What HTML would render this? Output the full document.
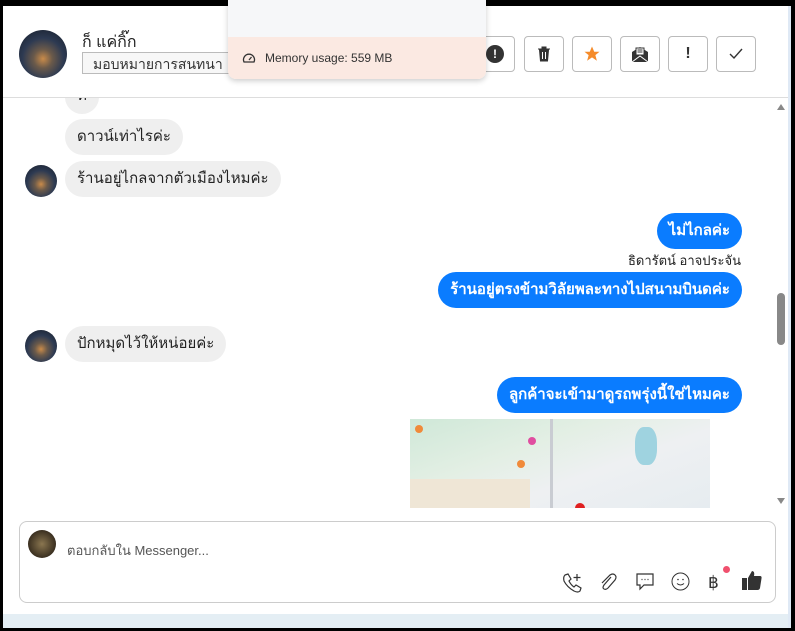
<!DOCTYPE html>
<html><head><meta charset="utf-8"><style>
*{box-sizing:border-box;margin:0;padding:0}
body{width:795px;height:631px;background:#000;position:relative;overflow:hidden;font-family:"Liberation Sans","Noto Sans CJK SC",sans-serif}
.win{position:absolute;left:3px;top:6px;width:785px;height:622px;background:#fff}
.rstrip{position:absolute;left:788px;top:6px;width:3px;height:622px;background:#dfe9f5}
.hdr{position:absolute;left:0;top:0;width:785px;height:92px;border-bottom:1px solid #ddd;background:#fff}
.av{position:absolute;border-radius:50%;background:radial-gradient(circle at 50% 60%,#c98b4a 0,#6b5a4a 25%,#2d3a52 55%,#141a24 100%)}
.name{position:absolute;left:79px;top:24px;font-size:16px;color:#222}
.sel{position:absolute;left:79px;top:46px;width:160px;height:22px;border:1px solid #bbb;background:#f7f7f7;font-size:14px;color:#333;padding:1px 10px;overflow:hidden;white-space:nowrap}
.btn{position:absolute;top:30px;width:40px;height:36px;border:1px solid #bbb;border-radius:4px;display:flex;align-items:center;justify-content:center;font-size:16px;color:#333;background:#fff}
.pop{position:absolute;width:258px;height:79px;border-radius:0 0 8px 8px;box-shadow:0 2px 6px rgba(0,0,0,.2);overflow:hidden}
.pop .t{height:37px;background:#f6f7f9}
.pop .b{height:42px;background:#fbe9e2;font-size:12px;color:#333;padding:14px 0 0 37px;position:relative}
.chat{position:absolute;left:0;top:92px;width:772px;height:410px;overflow:hidden}
.msg{position:absolute;border-radius:18px;font-size:15px;padding:0 12px;height:36px;line-height:36px;white-space:nowrap}
.in{background:#efefef;color:#222}
.out{background:#0a7cff;color:#fff;font-weight:bold}
.sb{position:absolute;left:772px;top:92px;width:13px;height:412px}
.comp{position:absolute;left:16px;top:515px;width:757px;height:82px;border:1px solid #ccc;border-radius:8px}
.bot{position:absolute;left:0;top:608px;width:785px;height:14px;background:#e4eef4}
.ic{position:absolute;top:566px}
</style></head><body>
<div class="win">
 <div class="chat">
  <div class="msg in" style="left:62px;top:-20px">ที่</div>
  <div class="msg in" style="left:62px;top:21px">ดาวน์เท่าไรค่ะ</div>
  <div class="av" style="left:22px;top:67px;width:32px;height:32px"></div>
  <div class="msg in" style="left:62px;top:63px">ร้านอยู่ไกลจากตัวเมืองไหมค่ะ</div>
  <div class="msg out" style="right:33px;top:115px">ไม่ไกลค่ะ</div>
  <div style="position:absolute;right:34px;top:152px;font-size:13px;color:#222">ธิดารัตน์ อาจประจัน</div>
  <div class="msg out" style="right:33px;top:174px">ร้านอยู่ตรงข้ามวิลัยพละทางไปสนามบินดค่ะ</div>
  <div class="av" style="left:22px;top:232px;width:32px;height:32px"></div>
  <div class="msg in" style="left:62px;top:228px">ปักหมุดไว้ให้หน่อยค่ะ</div>
  <div class="msg out" style="right:33px;top:279px">ลูกค้าจะเข้ามาดูรถพรุ่งนี้ใช่ไหมคะ</div>
  <div style="position:absolute;left:407px;top:321px;width:300px;height:91px;overflow:hidden;background:linear-gradient(160deg,#cfe8d8 0,#e3efe4 35%,#eef0f2 60%,#e6ecf0 100%)">
   <div style="position:absolute;left:0;top:60px;width:120px;height:40px;background:#efe6d6"></div>
   <div style="position:absolute;left:140px;top:0;width:3px;height:91px;background:#c9ccd2"></div>
   <div style="position:absolute;left:225px;top:8px;width:22px;height:38px;background:#9fd3e0;border-radius:40%"></div>
   <div style="position:absolute;left:5px;top:6px;width:8px;height:8px;border-radius:50%;background:#f08a3a"></div>
   <div style="position:absolute;left:107px;top:41px;width:8px;height:8px;border-radius:50%;background:#f08a3a"></div>
   <div style="position:absolute;left:118px;top:18px;width:8px;height:8px;border-radius:50%;background:#e04ea0"></div>
   <div style="position:absolute;left:165px;top:84px;width:10px;height:10px;border-radius:50%;background:#e02020"></div>
  </div>
 </div>
 <div class="hdr">
  <div class="av" style="left:16px;top:24px;width:48px;height:48px"></div>
  <div class="name">ก็ แค่กิ๊ก</div>
  <div class="sel">มอบหมายการสนทนา</div>
  <div class="btn" style="left:472px"><span style="width:18px;height:18px;border-radius:50%;background:#333;color:#fff;font-size:12px;font-weight:bold;display:flex;align-items:center;justify-content:center">!</span></div>
  <div class="btn" style="left:521px"><svg width="16" height="16" viewBox="0 0 16 16"><path d="M2 3h12M6 3V1h4v2M3.5 4l1 11h7l1-11z" fill="#333" stroke="#333"/><path d="M6.5 6v7M9.5 6v7" stroke="#fff"/></svg></div>
  <div class="btn" style="left:569px"><svg width="18" height="18" viewBox="0 0 24 24"><path d="M12 2l3 7h7l-5.5 4.5 2 7.5L12 16.5 5.5 21l2-7.5L2 9h7z" fill="#f58b2a"/></svg></div>
  <div class="btn" style="left:617px"><svg width="18" height="18" viewBox="0 0 18 18"><path d="M1 7l8-5 8 5v10H1z" fill="#333"/><rect x="5" y="3" width="8" height="7" fill="#fff" stroke="#333"/><path d="M6.5 5h5M6.5 7h5" stroke="#333"/><path d="M1 17l8-6 8 6" stroke="#fff" fill="none"/></svg></div>
  <div class="btn" style="left:665px;font-weight:bold">!</div>
  <div class="btn" style="left:713px"><svg width="14" height="12" viewBox="0 0 14 12"><path d="M1 6l4 4 8-9" stroke="#333" fill="none" stroke-width="1.4"/></svg></div>
 </div>
 <div class="pop" style="left:225px;top:-6px"><div class="t"></div><div class="b"><svg style="position:absolute;left:14px;top:15px" width="14" height="12" viewBox="0 0 14 12"><path d="M2 10a5.5 5.5 0 1 1 10 0z" fill="none" stroke="#333" stroke-width="1.3"/><path d="M7 8l2.5-3" stroke="#333" stroke-width="1.3"/></svg>Memory usage: 559 MB</div></div>
 <div class="sb">
  <div style="position:absolute;left:2px;top:6px;border:4px solid transparent;border-bottom:6px solid #888;border-top:0"></div>
  <div style="position:absolute;left:2px;top:195px;width:8px;height:52px;border-radius:4px;background:#888"></div>
  <div style="position:absolute;left:2px;top:400px;border:4px solid transparent;border-top:6px solid #888;border-bottom:0"></div>
 </div>
 <div class="comp"></div>
 <div class="av" style="left:25px;top:524px;width:28px;height:28px;background:radial-gradient(circle,#8a7650 0,#3a2f20 70%)"></div>
 <div style="position:absolute;left:64px;top:534px;font-size:13px;color:#555">ตอบกลับใน Messenger...</div>
 <svg class="ic" style="left:558px" width="22" height="22" viewBox="0 0 22 22"><path d="M4 3l3-1 3 5-2 2q2 4 5 6l2-2 5 3-1 3q-2 2-6 0Q6 15 3 9 2 5 4 3z" fill="none" stroke="#333" stroke-width="1.2"/><path d="M16 2v7M12.5 5.5h7" stroke="#333" stroke-width="1.2"/></svg>
 <svg class="ic" style="left:595px" width="20" height="20" viewBox="0 0 20 20"><path d="M13 5L6 13q-2 3 0 4t4-1l7-8q2-3 0-5t-5 0L4 11" fill="none" stroke="#333" stroke-width="1.2"/></svg>
 <svg class="ic" style="left:632px" width="20" height="20" viewBox="0 0 20 20"><path d="M2 2h16v11H9l-4 4v-4H2z" fill="none" stroke="#333" stroke-width="1.2"/><path d="M6.5 7.5h1M9.5 7.5h1M12.5 7.5h1" stroke="#333" stroke-width="1.3"/></svg>
 <svg class="ic" style="left:668px" width="19" height="19" viewBox="0 0 19 19"><circle cx="9.5" cy="9.5" r="8.5" fill="none" stroke="#333"/><path d="M6 11.5q3.5 3 7 0" fill="none" stroke="#333"/><circle cx="7" cy="7.5" r=".8" fill="#333"/><circle cx="12" cy="7.5" r=".8" fill="#333"/></svg>
 <div style="position:absolute;left:705px;top:567px;font-size:17px;color:#333">฿</div>
 <div style="position:absolute;left:720px;top:560px;width:7px;height:7px;border-radius:50%;background:#f0506e"></div>
 <svg class="ic" style="left:738px;top:563px" width="22" height="22" viewBox="0 0 22 22"><rect x="1" y="9" width="5" height="12" fill="#333"/><path d="M7 9l4-7q3 0 2 5h6q2 0 1.5 2.5L19 19q-.5 2-2.5 2H7z" fill="#333"/></svg>
 <div class="bot"></div>
</div>
<div class="rstrip"></div>
</body></html>
